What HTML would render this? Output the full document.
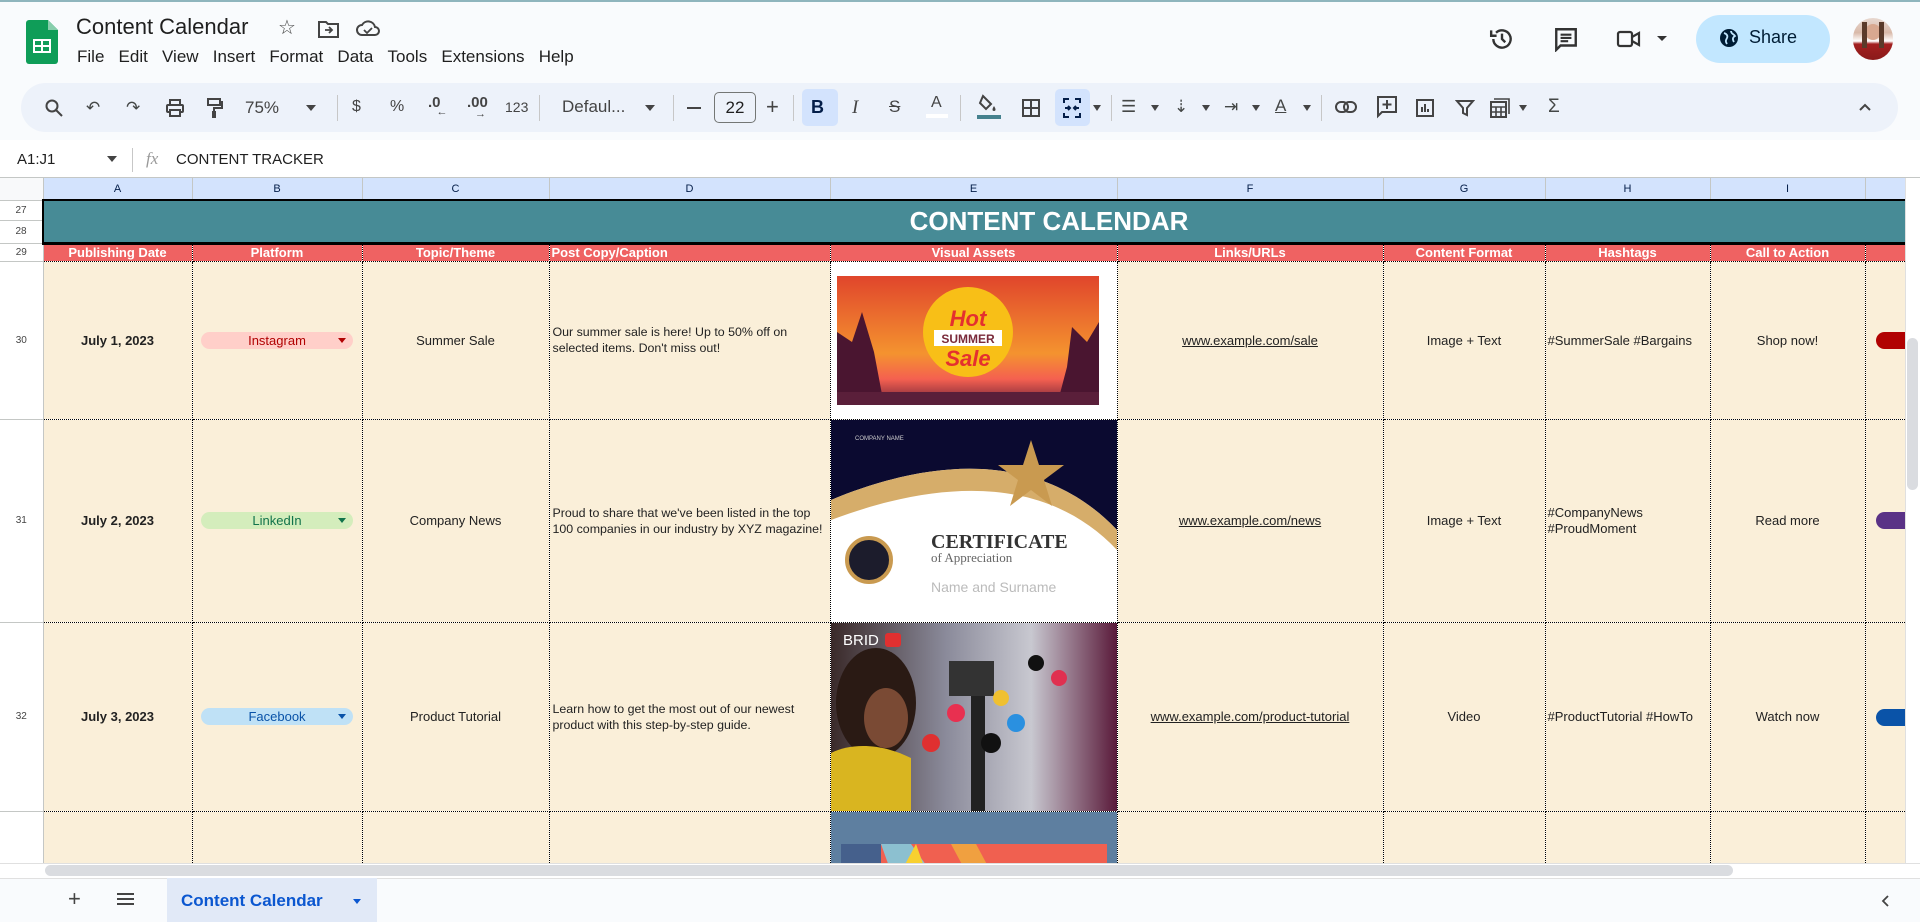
<!DOCTYPE html>
<html><head><meta charset="utf-8"><style>
*{box-sizing:border-box;margin:0;padding:0}
body{width:1920px;height:922px;overflow:hidden;background:#f9fbfd;font-family:"Liberation Sans",Arial,sans-serif;position:relative;color:#202124}
.a{position:absolute}
.ic{position:absolute;color:#444746;font-size:17px;line-height:20px;text-align:center}
table{position:absolute;left:0;top:178px;border-collapse:collapse;table-layout:fixed;background:#fff}
td{padding:0;overflow:hidden;font-size:13px;text-align:center;vertical-align:middle}
.ch td{background:#d3e3fd;color:#041e49;font-size:11px;border-right:1px solid #c4c7c5;border-bottom:1px solid #c4c7c5;height:22px}
.rh{background:#fff;color:#444;font-size:10px;border-right:1px solid #c4c7c5;border-bottom:1px solid #c4c7c5}
.hd td.c{background:#ef6262;color:#fff;font-weight:bold;font-size:13px;border-right:1px dotted #000;border-bottom:1px dotted #000}
.r td.c{background:#faefd9;border-right:1px dotted #000;border-bottom:1px dotted #000;color:#222}
.chip{display:inline-block;width:152px;height:17px;border-radius:9px;font-size:13px;line-height:17px;position:relative}
.chip:after{content:"";position:absolute;right:7px;top:6px;border:4px solid transparent;border-top:5px solid currentColor}
.pill{position:absolute;left:10px;width:40px;height:17px;border-radius:9px 0 0 9px}
u{text-decoration:underline}
.sep{position:absolute;top:95px;width:1px;height:26px;background:#c7c7c7}
.dc{text-align:left!important;padding-left:3px!important;line-height:16px;font-size:12.4px!important}
</style></head><body>
<div class="a" style="left:0;top:0;width:1920px;height:2px;background:#8fb5bd"></div>
<svg class="a" style="left:26px;top:20px" width="32" height="44" viewBox="0 0 32 44"><path d="M3 0h19l10 10v31a3 3 0 0 1-3 3H3a3 3 0 0 1-3-3V3a3 3 0 0 1 3-3z" fill="#0f9d58"/><path d="M22 0v10h10z" fill="#87ceac"/><rect x="7" y="19" width="18" height="14" fill="#fff"/><rect x="9" y="21" width="6" height="4" fill="#0f9d58"/><rect x="17" y="21" width="6" height="4" fill="#0f9d58"/><rect x="9" y="27" width="6" height="4" fill="#0f9d58"/><rect x="17" y="27" width="6" height="4" fill="#0f9d58"/></svg>
<div class="a" style="left:76px;top:14px;font-size:22px;color:#1f1f1f">Content Calendar</div>
<div class="a" style="left:278px;top:15px;font-size:20px;color:#444">☆</div>
<svg class="a" style="left:318px;top:20px" width="22" height="18" viewBox="0 0 22 18"><path d="M1 2h7l2 2h10v13H1z" fill="none" stroke="#444" stroke-width="2"/><path d="M7 10h7m-3-3l3 3-3 3" fill="none" stroke="#444" stroke-width="1.8"/></svg>
<svg class="a" style="left:356px;top:19px" width="24" height="18" viewBox="0 0 24 18"><path d="M6 16a5 5 0 0 1 0-10 7 7 0 0 1 13 2 4 4 0 0 1 0 8z" fill="none" stroke="#444" stroke-width="2"/><path d="M8 11l3 3 5-5" fill="none" stroke="#444" stroke-width="1.8"/></svg>
<div class="a" style="left:77px;top:47px;font-size:17px;color:#1f1f1f">File&nbsp;&nbsp;&nbsp;Edit&nbsp;&nbsp;&nbsp;View&nbsp;&nbsp;&nbsp;Insert&nbsp;&nbsp;&nbsp;Format&nbsp;&nbsp;&nbsp;Data&nbsp;&nbsp;&nbsp;Tools&nbsp;&nbsp;&nbsp;Extensions&nbsp;&nbsp;&nbsp;Help</div>
<svg class="a" style="left:1489px;top:26px" width="26" height="26" viewBox="0 0 24 24"><path d="M4 12a8 8 0 1 0 2.5-5.8" fill="none" stroke="#333" stroke-width="2.2"/><path d="M2 4v5h5" fill="none" stroke="#333" stroke-width="2.2"/><path d="M12 7v5l3 3" fill="none" stroke="#333" stroke-width="2.2"/></svg>
<svg class="a" style="left:1553px;top:26px" width="26" height="26" viewBox="0 0 24 24"><path d="M3 3h18v15H7l-4 4z" fill="none" stroke="#333" stroke-width="2.2"/><path d="M7 8h10M7 11h10M7 14h7" stroke="#333" stroke-width="2"/></svg>
<svg class="a" style="left:1616px;top:28px" width="26" height="22" viewBox="0 0 26 22"><rect x="2" y="4" width="14" height="14" rx="2" fill="none" stroke="#333" stroke-width="2.2"/><path d="M16 9l7-4v12l-7-4" fill="none" stroke="#333" stroke-width="2.2"/></svg>
<div class="a" style="left:1657px;top:36px;border:5px solid transparent;border-top:5px solid #333"></div>
<div class="a" style="left:1696px;top:15px;width:134px;height:48px;border-radius:24px;background:#c2e7ff"></div>
<svg class="a" style="left:1719px;top:28px" width="20" height="20" viewBox="0 0 20 20"><circle cx="10" cy="10" r="9" fill="#001d35"/><path d="M5 5c3 1 4 3 3 5s-2 3 0 6M12 3c0 3 3 3 4 5-2 1-3 3-1 6" fill="none" stroke="#c2e7ff" stroke-width="1.8"/></svg>
<div class="a" style="left:1749px;top:27px;font-size:18px;color:#001d35">Share</div>
<div class="a" style="left:1853px;top:18px;width:40px;height:42px;border-radius:20px;background:linear-gradient(#e8d8d0 0,#d9b9a9 35%,#fff 55%,#a32020 62%,#8a1a1a 100%);overflow:hidden"><div class="a" style="left:12px;top:6px;width:16px;height:16px;border-radius:8px;background:#d8a890"></div><div class="a" style="left:9px;top:4px;width:5px;height:26px;background:#5a3a2a"></div><div class="a" style="left:26px;top:4px;width:5px;height:26px;background:#5a3a2a"></div></div>
<div class="a" style="left:21px;top:83px;width:1877px;height:49px;border-radius:25px;background:#edf2fa"></div>
<svg class="a" style="left:44px;top:98px" width="20" height="20" viewBox="0 0 20 20"><circle cx="8" cy="8" r="5.5" fill="none" stroke="#444" stroke-width="2"/><path d="M12 12l6 6" stroke="#444" stroke-width="2"/></svg>
<div class="ic" style="left:86px;top:98px">↶</div>
<div class="ic" style="left:126px;top:98px">↷</div>
<svg class="a" style="left:165px;top:98px" width="20" height="20" viewBox="0 0 20 20"><rect x="5" y="2" width="10" height="5" fill="none" stroke="#444" stroke-width="2"/><rect x="2" y="7" width="16" height="7" rx="1" fill="none" stroke="#444" stroke-width="2"/><rect x="5" y="12" width="10" height="6" fill="#edf2fa" stroke="#444" stroke-width="2"/></svg>
<svg class="a" style="left:205px;top:97px" width="18" height="22" viewBox="0 0 18 22"><rect x="3" y="2" width="12" height="6" fill="none" stroke="#444" stroke-width="2"/><path d="M15 5h2v6H9v3" fill="none" stroke="#444" stroke-width="2"/><rect x="7" y="14" width="4" height="7" fill="#444"/></svg>
<div class="a" style="left:245px;top:98px;font-size:17px;color:#444">75%</div>
<div class="a" style="left:306px;top:105px;border:5px solid transparent;border-top:6px solid #444"></div>
<div class="sep" style="left:337px"></div>
<div class="a" style="left:352px;top:98px;font-size:16px;color:#444">$</div>
<div class="a" style="left:390px;top:98px;font-size:16px;color:#444">%</div>
<div class="a" style="left:428px;top:94px;font-size:15px;color:#444;font-weight:bold">.0<span style="font-size:11px;position:relative;top:8px;left:-4px">←</span></div>
<div class="a" style="left:467px;top:94px;font-size:15px;color:#444;font-weight:bold">.00<span style="font-size:11px;position:absolute;top:14px;left:8px">→</span></div>
<div class="a" style="left:505px;top:99px;font-size:14px;color:#444">123</div>
<div class="sep" style="left:539px"></div>
<div class="a" style="left:562px;top:97px;font-size:17px;color:#444">Defaul...</div>
<div class="a" style="left:645px;top:105px;border:5px solid transparent;border-top:6px solid #444"></div>
<div class="sep" style="left:673px"></div>
<div class="a" style="left:687px;top:107px;width:14px;height:2px;background:#444"></div>
<div class="a" style="left:714px;top:92px;width:42px;height:31px;border:1px solid #747775;border-radius:5px;font-size:17px;color:#1f1f1f;text-align:center;line-height:29px">22</div>
<div class="a" style="left:766px;top:96px;font-size:22px;color:#444;line-height:22px">+</div>
<div class="sep" style="left:793px"></div>
<div class="a" style="left:802px;top:89px;width:36px;height:37px;border-radius:5px;background:#d3e3fd"></div>
<div class="a" style="left:811px;top:97px;font-size:18px;font-weight:bold;color:#041e49">B</div>
<div class="a" style="left:852px;top:97px;font-size:19px;font-style:italic;font-family:'Liberation Serif',serif;color:#444">I</div>
<div class="a" style="left:889px;top:97px;font-size:17px;color:#444;text-decoration:line-through">S</div>
<div class="a" style="left:931px;top:94px;font-size:16px;color:#444">A</div>
<div class="a" style="left:926px;top:114px;width:22px;height:4px;background:#fff"></div>
<div class="sep" style="left:960px"></div>
<svg class="a" style="left:977px;top:92px" width="24" height="28" viewBox="0 0 24 28"><path d="M6 4l8 8-5 5-6-6z" fill="none" stroke="#444" stroke-width="2"/><path d="M17 14c2 3 2 5 0 5s-2-2 0-5z" fill="#444"/><rect x="0" y="23" width="24" height="4" fill="#45818e"/></svg>
<svg class="a" style="left:1021px;top:98px" width="20" height="20" viewBox="0 0 20 20"><rect x="2" y="2" width="16" height="16" fill="none" stroke="#444" stroke-width="2"/><path d="M10 2v16M2 10h16" stroke="#444" stroke-width="2"/></svg>
<div class="a" style="left:1055px;top:89px;width:35px;height:37px;border-radius:5px;background:#d3e3fd"></div>
<svg class="a" style="left:1062px;top:97px" width="20" height="22" viewBox="0 0 20 22"><path d="M2 6V2h5M13 2h5v4M2 16v4h5M13 20h5v-4M3 11h5m-2-2l2 2-2 2M17 11h-5m2-2l-2 2 2 2" fill="none" stroke="#041e49" stroke-width="2"/></svg>
<div class="a" style="left:1093px;top:105px;border:4px solid transparent;border-top:6px solid #444"></div>
<div class="sep" style="left:1111px"></div>
<div class="ic" style="left:1121px;top:97px">☰</div>
<div class="a" style="left:1151px;top:105px;border:4px solid transparent;border-top:6px solid #444"></div>
<div class="ic" style="left:1174px;top:97px">⇣</div>
<div class="a" style="left:1202px;top:105px;border:4px solid transparent;border-top:6px solid #444"></div>
<div class="ic" style="left:1224px;top:97px">⇥</div>
<div class="a" style="left:1252px;top:105px;border:4px solid transparent;border-top:6px solid #444"></div>
<div class="ic" style="left:1275px;top:96px;text-decoration:underline">A</div>
<div class="a" style="left:1303px;top:105px;border:4px solid transparent;border-top:6px solid #444"></div>
<div class="sep" style="left:1321px"></div>
<svg class="a" style="left:1335px;top:100px" width="22" height="14" viewBox="0 0 22 14"><rect x="1" y="2" width="12" height="10" rx="5" fill="none" stroke="#444" stroke-width="2"/><rect x="9" y="2" width="12" height="10" rx="5" fill="none" stroke="#444" stroke-width="2"/></svg>
<svg class="a" style="left:1376px;top:95px" width="22" height="24" viewBox="0 0 22 24"><path d="M2 2h18v15H6l-4 4z" fill="none" stroke="#444" stroke-width="2"/><path d="M11 5v9M6.5 9.5h9" stroke="#444" stroke-width="2"/></svg>
<svg class="a" style="left:1415px;top:98px" width="20" height="20" viewBox="0 0 20 20"><rect x="2" y="2" width="16" height="16" fill="none" stroke="#444" stroke-width="2"/><path d="M7 14V9M10 14V6M13 14v-3" stroke="#444" stroke-width="2"/></svg>
<svg class="a" style="left:1455px;top:98px" width="20" height="20" viewBox="0 0 20 20"><path d="M2 3h16l-6 7v7l-4-2v-5z" fill="none" stroke="#444" stroke-width="2"/></svg>
<svg class="a" style="left:1489px;top:97px" width="22" height="22" viewBox="0 0 22 22"><rect x="2" y="5" width="15" height="15" fill="none" stroke="#444" stroke-width="2"/><path d="M5 2h15v15M2 10h15M7 10v10M12 10v10M2 15h15" fill="none" stroke="#444" stroke-width="1.6"/></svg>
<div class="a" style="left:1519px;top:105px;border:4px solid transparent;border-top:6px solid #444"></div>
<div class="ic" style="left:1548px;top:97px;font-size:19px">Σ</div>
<svg class="a" style="left:1858px;top:102px" width="14" height="10" viewBox="0 0 14 10"><path d="M2 8l5-5 5 5" fill="none" stroke="#444" stroke-width="2"/></svg>
<div class="a" style="left:0;top:140px;width:1920px;height:38px;background:#fff"></div>
<div class="a" style="left:17px;top:151px;font-size:15px;color:#1f1f1f">A1:J1</div>
<div class="a" style="left:107px;top:156px;border:5px solid transparent;border-top:6px solid #444"></div>
<div class="a" style="left:132px;top:148px;width:1px;height:24px;background:#c7c7c7"></div>
<div class="a" style="left:146px;top:149px;font-size:17px;font-style:italic;font-family:'Liberation Serif',serif;color:#999">fx</div>
<div class="a" style="left:176px;top:151px;font-size:15px;color:#1f1f1f">CONTENT TRACKER</div>
<div class="a" style="left:0;top:177px;width:1920px;height:1px;background:#c4c7c5"></div>
<table>
<colgroup><col style="width:43px"><col style="width:149px"><col style="width:170px"><col style="width:187px"><col style="width:281px"><col style="width:286px"><col style="width:266px"><col style="width:162px"><col style="width:165px"><col style="width:155px"><col style="width:41px"></colgroup>
<tr class="ch"><td style="background:#f8f9fa"></td><td>A</td><td>B</td><td>C</td><td>D</td><td>E</td><td>F</td><td>G</td><td>H</td><td>I</td><td></td></tr>
<tr style="height:20px"><td class="rh">27</td><td colspan="10" rowspan="2" style="background:#478b96;color:#fff;font-weight:bold;font-size:26px;border-bottom:3px solid #000;border-top:2px solid #000;border-left:2px solid #000;padding-left:148px">CONTENT CALENDAR</td></tr>
<tr style="height:23px"><td class="rh">28</td></tr>
<tr class="hd" style="height:18px"><td class="rh">29</td><td class="c">Publishing Date</td><td class="c">Platform</td><td class="c">Topic/Theme</td><td class="c" style="text-align:left;padding-left:2px">Post Copy/Caption</td><td class="c">Visual Assets</td><td class="c">Links/URLs</td><td class="c">Content Format</td><td class="c">Hashtags</td><td class="c">Call to Action</td><td class="c"></td></tr>
<tr class="r" style="height:157px"><td class="rh">30</td><td class="c"><b>July 1, 2023</b></td><td class="c"><span class="chip" style="background:#ffcfc9;color:#b10202">Instagram</span></td><td class="c">Summer Sale</td><td class="c dc">Our summer sale is here! Up to 50% off on selected items. Don't miss out!</td>
<td class="c" style="background:#fff;position:relative"><svg width="286" height="157" viewBox="0 0 286 157" style="display:block"><defs><linearGradient id="g1" x1="0" y1="0" x2="0" y2="1"><stop offset="0" stop-color="#e0452c"/><stop offset=".6" stop-color="#f4932f"/><stop offset=".8" stop-color="#f46050"/><stop offset="1" stop-color="#6a1f38"/></linearGradient></defs><rect x="6" y="14" width="262" height="129" fill="url(#g1)"/><circle cx="137" cy="70" r="45" fill="#f8bf17"/><text x="137" y="64" text-anchor="middle" font-family="Liberation Sans" font-weight="bold" font-style="italic" font-size="22" fill="#e4302f">Hot</text><rect x="103" y="68" width="68" height="16" fill="#fff"/><text x="137" y="81" text-anchor="middle" font-family="Liberation Sans" font-weight="bold" font-size="12" fill="#7a2a3a">SUMMER</text><text x="137" y="104" text-anchor="middle" font-family="Liberation Sans" font-weight="bold" font-style="italic" font-size="22" fill="#e4302f">Sale</text><path d="M6 143V70l15 10 10-30 12 40 10 53zM268 143V60l-12 20-15-15-5 40-10 38z" fill="#4a1530"/><path d="M6 130h262v13H6z" fill="#5a1f3a"/></svg></td>
<td class="c"><u>www.example.com/sale</u></td><td class="c">Image + Text</td><td class="c" style="text-align:left;padding-left:2px">#SummerSale #Bargains</td><td class="c">Shop now!</td><td class="c" style="position:relative"><div class="pill" style="background:#b10202;top:70px"></div></td></tr>
<tr class="r" style="height:202px"><td class="rh">31</td><td class="c"><b>July 2, 2023</b></td><td class="c"><span class="chip" style="background:#d4edbc;color:#11734b">LinkedIn</span></td><td class="c">Company News</td><td class="c dc">Proud to share that we've been listed in the top 100 companies in our industry by XYZ magazine!</td>
<td class="c" style="background:#fff"><svg width="286" height="202" viewBox="0 0 286 202" style="display:block"><rect width="286" height="202" fill="#fff"/><path d="M0 0h286v110C220 40 120 30 0 80z" fill="#0b0a30"/><path d="M0 80C120 30 220 40 286 110v20C220 60 120 55 0 100z" fill="#d6ad6a"/><path d="M200 20l8 25h25l-20 15 8 26-21-16-21 16 8-26-20-15h25z" fill="#c99a50"/><text x="100" y="128" font-family="Liberation Serif" font-weight="bold" font-size="20" fill="#333">CERTIFICATE</text><text x="100" y="142" font-family="Liberation Serif" font-size="13" fill="#666">of Appreciation</text><text x="100" y="172" font-family="Liberation Sans" font-size="14" fill="#bbb">Name and Surname</text><circle cx="38" cy="140" r="22" fill="#1c1c2c" stroke="#c99a50" stroke-width="4"/><text x="24" y="20" font-family="Liberation Sans" font-size="6" fill="#ccc">COMPANY NAME</text></svg></td>
<td class="c"><u>www.example.com/news</u></td><td class="c">Image + Text</td><td class="c" style="text-align:left;padding-left:2px;line-height:16px">#CompanyNews<br>#ProudMoment</td><td class="c">Read more</td><td class="c" style="position:relative"><div class="pill" style="background:#5a3286;top:92px"></div></td></tr>
<tr class="r" style="height:188px"><td class="rh">32</td><td class="c"><b>July 3, 2023</b></td><td class="c"><span class="chip" style="background:#bfe1f6;color:#0a53a8">Facebook</span></td><td class="c">Product Tutorial</td><td class="c dc">Learn how to get the most out of our newest product with this step-by-step guide.</td>
<td class="c" style="background:#333"><svg width="286" height="188" viewBox="0 0 286 188" style="display:block"><defs><linearGradient id="g3" x1="0" y1="0" x2="1" y2="0"><stop offset="0" stop-color="#3a2a2a"/><stop offset=".4" stop-color="#8a8a9a"/><stop offset=".7" stop-color="#c8c8d0"/><stop offset="1" stop-color="#5a1a3a"/></linearGradient></defs><rect width="286" height="188" fill="url(#g3)"/><ellipse cx="45" cy="80" rx="40" ry="55" fill="#2a1a14"/><ellipse cx="55" cy="95" rx="22" ry="30" fill="#7a4a34"/><path d="M0 188V130c20-10 50-10 80 5v53z" fill="#d9b520"/><rect x="140" y="60" width="14" height="128" fill="#222"/><rect x="118" y="38" width="45" height="35" fill="#333"/><circle cx="125" cy="90" r="9" fill="#e83050"/><circle cx="160" cy="120" r="10" fill="#111"/><circle cx="185" cy="100" r="9" fill="#2a90e0"/><circle cx="205" cy="40" r="8" fill="#111"/><circle cx="100" cy="120" r="9" fill="#e03030"/><circle cx="170" cy="75" r="8" fill="#f0c030"/><circle cx="228" cy="55" r="8" fill="#e03050"/><text x="12" y="22" font-family="Liberation Sans" font-size="15" fill="#fff">BRID</text><rect x="54" y="10" width="16" height="14" rx="3" fill="#e03030"/></svg></td>
<td class="c"><u>www.example.com/product-tutorial</u></td><td class="c">Video</td><td class="c" style="text-align:left;padding-left:2px">#ProductTutorial #HowTo</td><td class="c">Watch now</td><td class="c" style="position:relative"><div class="pill" style="background:#0a53a8;top:86px"></div></td></tr>
<tr class="r" style="height:60px"><td class="rh"></td><td class="c"></td><td class="c"></td><td class="c"></td><td class="c"></td>
<td class="c" style="background:#5e7fa0;vertical-align:top"><svg width="286" height="60" viewBox="0 0 286 60" style="display:block"><rect x="10" y="32" width="266" height="28" fill="#f06050"/><rect x="10" y="32" width="40" height="28" fill="#45608c"/><path d="M50 32h30l20 28H60z" fill="#8cc0d0"/><path d="M70 60l15-28 10 28z" fill="#f8d030"/><path d="M120 32h25l15 28h-25z" fill="#f0a040"/><rect x="100" y="52" width="150" height="8" fill="#fff"/></svg></td>
<td class="c"></td><td class="c"></td><td class="c"></td><td class="c"></td><td class="c"></td></tr>
</table>
<div class="a" style="left:1905px;top:178px;width:15px;height:700px;background:#fff;border-left:1px solid #e0e0e0"></div>
<div class="a" style="left:1907px;top:338px;width:11px;height:152px;border-radius:6px;background:#dadce0"></div>
<div class="a" style="left:0;top:863px;width:1920px;height:15px;background:#fff;border-top:1px solid #e0e0e0"></div>
<div class="a" style="left:45px;top:865px;width:1688px;height:11px;border-radius:6px;background:#dadce0"></div>
<div class="a" style="left:0;top:878px;width:1920px;height:44px;background:#f9fbfd;border-top:1px solid #e0e0e0"></div>
<div class="a" style="left:68px;top:886px;font-size:22px;color:#444">+</div>
<div class="a" style="left:117px;top:893px;width:17px;height:2px;background:#444;box-shadow:0 5px 0 #444,0 10px 0 #444"></div>
<div class="a" style="left:167px;top:878px;width:210px;height:44px;background:#e1e9f7"></div>
<div class="a" style="left:181px;top:891px;font-size:17px;font-weight:bold;color:#0b57d0">Content Calendar</div>
<div class="a" style="left:353px;top:899px;border:4px solid transparent;border-top:5px solid #0b57d0"></div>
<svg class="a" style="left:1880px;top:894px" width="10" height="14" viewBox="0 0 10 14"><path d="M8 2L3 7l5 5" fill="none" stroke="#444" stroke-width="1.8"/></svg>
</body></html>
